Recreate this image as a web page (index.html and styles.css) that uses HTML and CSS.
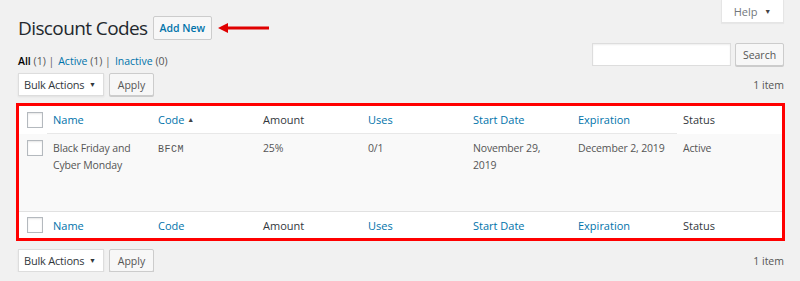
FILE: index.html
```html
<!DOCTYPE html>
<html lang="en">
<head>
    <meta charset="UTF-8">
    <meta name="viewport" content="width=device-width, initial-scale=1.0">
    <title>Discount Codes</title>
    <link rel="stylesheet" href="styles.css">
</head>
<body>
    <div class="screen-meta">
        <button class="help-tab">Help <span class="caret">&#9660;</span></button>
    </div>

    <div class="wrap">
        <h1 class="page-title">
            Discount Codes
            <a href="#" class="add-new">Add New</a>
            <svg class="arrow" width="51" height="10" viewBox="0 0 51 10">
                <path d="M8 5 H51" stroke="#e00000" stroke-width="3"/>
                <path d="M0 5 L10 0 L10 10 Z" fill="#e00000"/>
            </svg>
        </h1>

        <div class="filters">
            <ul class="subsubsub">
                <li><a href="#" class="current">All <span class="count">(1)</span></a> |</li>
                <li><a href="#">Active <span class="count">(1)</span></a> |</li>
                <li><a href="#">Inactive <span class="count">(0)</span></a></li>
            </ul>
            <div class="search-box">
                <input type="search" class="search-input">
                <button class="button">Search</button>
            </div>
        </div>

        <div class="tablenav">
            <div class="bulk">
                <div class="select">Bulk Actions <span class="caret">&#9660;</span></div>
                <button class="button">Apply</button>
            </div>
            <span class="items">1 item</span>
        </div>

        <div class="highlight">
            <table class="list-table">
                <colgroup>
                    <col class="col-check">
                    <col><col><col><col><col><col><col>
                </colgroup>
                <thead>
                    <tr>
                        <td class="check"><span class="checkbox"></span></td>
                        <th class="lined"><a href="#">Name</a></th>
                        <th class="lined"><a href="#">Code</a> <span class="sort">&#9650;</span></th>
                        <th class="lined">Amount</th>
                        <th class="lined"><a href="#">Uses</a></th>
                        <th class="lined"><a href="#">Start Date</a></th>
                        <th class="lined"><a href="#">Expiration</a></th>
                        <th>Status</th>
                    </tr>
                </thead>
                <tbody>
                    <tr>
                        <td class="check"><span class="checkbox"></span></td>
                        <td>Black Friday and Cyber Monday</td>
                        <td><code>BFCM</code></td>
                        <td>25%</td>
                        <td>0/1</td>
                        <td>November 29, 2019</td>
                        <td>December 2, 2019</td>
                        <td>Active</td>
                    </tr>
                </tbody>
                <tfoot>
                    <tr>
                        <td class="check"><span class="checkbox"></span></td>
                        <th><a href="#">Name</a></th>
                        <th><a href="#">Code</a></th>
                        <th>Amount</th>
                        <th><a href="#">Uses</a></th>
                        <th><a href="#">Start Date</a></th>
                        <th><a href="#">Expiration</a></th>
                        <th>Status</th>
                    </tr>
                </tfoot>
            </table>
        </div>

        <div class="tablenav bottom">
            <div class="bulk">
                <div class="select">Bulk Actions <span class="caret">&#9660;</span></div>
                <button class="button">Apply</button>
            </div>
            <span class="items">1 item</span>
        </div>
    </div>
</body>
</html>
```

FILE: styles.css
```css
body {
    margin: 0;
    background-color: #f1f1f1;
    font-family: "Open Sans", "Noto Sans", sans-serif;
    font-size: 10.5px;
    color: #444;
}

a {
    color: #0073aa;
    text-decoration: none;
}

.screen-meta {
    float: right;
    margin-right: 16px;
}

.help-tab {
    width: 63px;
    height: 23px;
    padding: 0;
    background-color: #fff;
    border: 1px solid #e5e5e5;
    border-top: none;
    box-shadow: 0 1px 1px rgba(0, 0, 0, 0.04);
    font-family: inherit;
    font-size: 11px;
    color: #72777c;
}

.help-tab .caret {
    font-size: 7px;
    color: #444;
    margin-left: 4px;
    vertical-align: 2px;
}

.wrap {
    padding: 0 16px 0 18px;
}

.page-title {
    display: flex;
    align-items: center;
    margin: 0;
    padding-top: 16px;
    height: 24px;
    font-size: 19px;
    letter-spacing: -0.6px;
    font-weight: 400;
    color: #23282d;
}

.add-new {
    margin-left: 5px;
    height: 22px;
    padding: 0 6px;
    line-height: 22px;
    background-color: #f7f7f7;
    border: 1px solid #ccc;
    border-radius: 2px;
    font-size: 10.5px;
    letter-spacing: 0;
    font-weight: 600;
}

.arrow {
    margin-left: 6px;
}

.filters {
    display: flex;
    justify-content: space-between;
    margin-top: 3px;
    height: 23px;
}

.subsubsub {
    display: flex;
    list-style: none;
    margin: 10px 0 0;
    padding: 0;
    color: #666;
    line-height: 16px;
}

.subsubsub li {
    margin-right: 4px;
}

.subsubsub .current {
    color: #000;
    font-weight: 600;
}

.subsubsub .count {
    font-weight: 400;
    color: #555;
}

.search-box {
    display: flex;
    gap: 4px;
}

.search-input {
    width: 139px;
    height: 23px;
    box-sizing: border-box;
    margin: 0;
    border: 1px solid #ddd;
    box-shadow: inset 0 1px 2px rgba(0, 0, 0, 0.07);
    background-color: #fff;
}

.button {
    height: 23px;
    padding: 0 8px;
    background-color: #f7f7f7;
    border: 1px solid #ccc;
    border-radius: 2px;
    box-shadow: 0 1px 0 #ccc;
    font-family: inherit;
    font-size: 10.5px;
    color: #555;
}

.search-box .button {
    width: 49px;
    padding: 0;
}

.bulk .button {
    width: 45px;
    padding: 0;
}

.tablenav {
    display: flex;
    justify-content: space-between;
    align-items: center;
    margin-top: 7px;
    height: 23px;
}

.tablenav.bottom {
    margin-top: 8px;
}

.bulk {
    display: flex;
    gap: 5px;
}

.select {
    width: 86px;
    height: 23px;
    box-sizing: border-box;
    padding-left: 5px;
    line-height: 21px;
    white-space: nowrap;
    background-color: #fff;
    border: 1px solid #ddd;
    box-shadow: 0 1px 2px rgba(0, 0, 0, 0.07);
    font-size: 11px;
    letter-spacing: -0.2px;
    color: #32373c;
}

.select .caret {
    font-size: 7px;
    margin-left: 2px;
    vertical-align: 2px;
}

.items {
    color: #555;
}

.highlight {
    margin-top: 7px;
    margin-left: -2px;
    margin-right: -1px;
    border: 3px solid #ff0000;
}

.list-table {
    width: 100%;
    table-layout: fixed;
    border-collapse: collapse;
    background-color: #fff;
}

.col-check {
    width: 28px;
}

.list-table th,
.list-table td {
    padding: 0 6px;
    text-align: left;
    vertical-align: top;
    font-weight: 400;
}

.list-table thead th,
.list-table thead td {
    height: 27px;
    vertical-align: middle;
    font-size: 11px;
    color: #32373c;
}

.list-table thead th.lined {
    border-bottom: 1px solid #e8e8e8;
}

.list-table tbody td {
    height: 78px;
    box-sizing: border-box;
    padding-top: 6px;
    background-color: #f9f9f9;
    line-height: 17px;
    letter-spacing: -0.15px;
    color: #555;
    border-bottom: 1px solid #e1e1e1;
}

.list-table tfoot th,
.list-table tfoot td {
    height: 26px;
    vertical-align: middle;
    font-size: 11px;
    color: #32373c;
}

.list-table .check {
    padding: 0 0 0 8px;
}

.list-table tbody .check {
    padding-top: 6px;
}

.checkbox {
    display: block;
    width: 14px;
    height: 14px;
    background-color: #fff;
    border: 1px solid #b4b9be;
    box-shadow: inset 0 1px 2px rgba(0, 0, 0, 0.1);
}

.sort {
    font-size: 7px;
    color: #444;
    vertical-align: 2px;
}

code {
    font-family: "Liberation Mono", monospace;
    font-size: 10px;
    letter-spacing: 0.5px;
}
```
